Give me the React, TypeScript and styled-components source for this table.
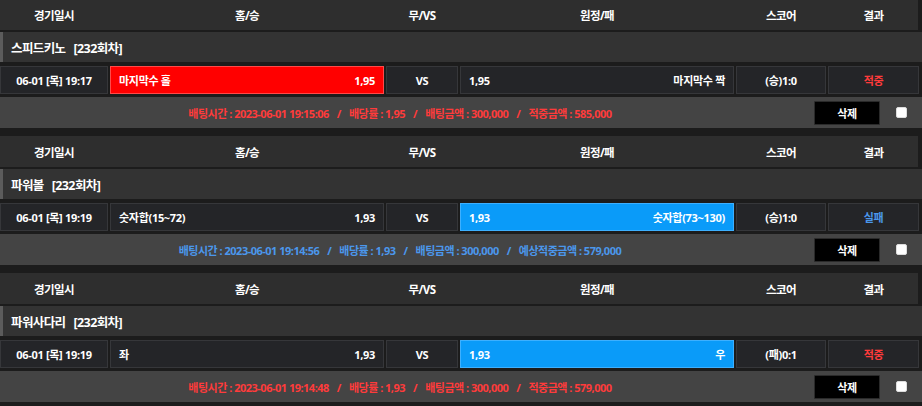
import React from 'react'
import styled, { createGlobalStyle } from 'styled-components'

type Bet = {
	game: string
	date: string
	home: string
	homeOdds: string
	away: string
	awayOdds: string
	pick: 'home' | 'away'
	score: string
	result: string
	win: boolean
	info: [string, string][]
}

const bets: Bet[] = [
	{
		game: '스피드키노',
		date: '06-01 [목] 19:17',
		home: '마지막수 홀',
		homeOdds: '1,95',
		away: '마지막수 짝',
		awayOdds: '1,95',
		pick: 'home',
		score: '(승)1:0',
		result: '적중',
		win: true,
		info: [
			['배팅시간', '2023-06-01 19:15:06'],
			['배당률', '1,95'],
			['배팅금액', '300,000'],
			['적중금액', '585,000'],
		],
	},
	{
		game: '파워볼',
		date: '06-01 [목] 19:19',
		home: '숫자합(15~72)',
		homeOdds: '1,93',
		away: '숫자합(73~130)',
		awayOdds: '1,93',
		pick: 'away',
		score: '(승)1:0',
		result: '실패',
		win: false,
		info: [
			['배팅시간', '2023-06-01 19:14:56'],
			['배당률', '1,93'],
			['배팅금액', '300,000'],
			['예상적중금액', '579,000'],
		],
	},
	{
		game: '파워사다리',
		date: '06-01 [목] 19:19',
		home: '좌',
		homeOdds: '1,93',
		away: '우',
		awayOdds: '1,93',
		pick: 'away',
		score: '(패)0:1',
		result: '적중',
		win: true,
		info: [
			['배팅시간', '2023-06-01 19:14:48'],
			['배당률', '1,93'],
			['배팅금액', '300,000'],
			['적중금액', '579,000'],
		],
	},
]

const RED = '#ff3b3b'
const BLUE = '#4b97ec'

const GlobalStyle = createGlobalStyle`
	html, body {
		margin: 0;
		padding: 0;
		background: #1c1c1c;
	}
	body {
		font-family: 'Noto Sans', 'Noto Sans CJK KR', sans-serif;
		color: #fff;
	}
`

const Page = styled.div`
	width: 922px;
	margin-top: -1px;
`

const Block = styled.section`
	display: flex;
	flex-direction: column;
	margin-bottom: 8px;
`

const Columns = styled.div`
	display: grid;
	grid-template-columns: 108px 274px 72px 274px 90px 91px;
	column-gap: 2px;
	width: 919px;
`

const HeadRow = styled(Columns)`
	height: 31px;
	background: #2e2e2e;
	border-right: 1px solid #1c1c1c;
	box-sizing: border-box;
`

const HeadCell = styled.div`
	display: flex;
	align-items: center;
	justify-content: center;
	font-size: 11.5px;
	font-weight: 700;
	letter-spacing: -0.6px;
`

const Title = styled.div`
	margin-top: 2px;
	height: 30px;
	display: flex;
	align-items: center;
	padding-left: 8px;
	background: #333333;
	border-left: 3px solid #5c5c5c;
	font-size: 12.5px;
	font-weight: 700;
	letter-spacing: -0.6px;
`

const Round = styled.span`
	margin-left: 8px;
`

const DataRow = styled(Columns)`
	margin-top: 4px;
	height: 28px;
`

const Cell = styled.div<{ $fill?: string; $edge?: string; $align?: string; $color?: string }>`
	display: flex;
	align-items: center;
	justify-content: ${(p) => p.$align || 'center'};
	padding: 0 8px;
	background: ${(p) => p.$fill || '#242528'};
	border: 1px solid ${(p) => p.$edge || '#36373a'};
	color: ${(p) => p.$color || '#fff'};
	font-size: 11px;
	font-weight: 700;
	letter-spacing: -0.3px;
	white-space: nowrap;
`

const BetRow = styled.div<{ $color: string }>`
	margin-top: 3px;
	height: 31px;
	display: flex;
	align-items: center;
	background: #444444;
	color: ${(p) => p.$color};
	font-size: 11px;
	font-weight: 700;
	letter-spacing: -0.5px;
`

const Info = styled.div`
	width: 800px;
	text-align: center;
	white-space: pre;
`

const Slash = styled.span`
	margin: 0 8px;
`

const DeleteButton = styled.button`
	margin-left: 14px;
	width: 66px;
	height: 24px;
	background: #000;
	border: 1px solid #2a2a2a;
	border-radius: 1px;
	color: #fff;
	font-family: inherit;
	font-size: 11px;
	font-weight: 700;
	letter-spacing: -0.3px;
	padding: 0;
`

const Check = styled.span`
	margin-left: 16px;
	width: 11px;
	height: 11px;
	background: #fff;
	border-radius: 2px;
	box-sizing: border-box;
	border: 1px solid #ddd;
`

const headers = ['경기일시', '홈/승', '무/VS', '원정/패', '스코어', '결과']

function BetBlock({ bet }: { bet: Bet }) {
	const homeOn = bet.pick === 'home'
	const awayOn = bet.pick === 'away'
	const infoColor = bet.win ? RED : BLUE

	return (
		<Block>
			<HeadRow>
				{headers.map((h) => (
					<HeadCell key={h}>{h}</HeadCell>
				))}
			</HeadRow>
			<Title>
				{bet.game}
				<Round>[232회차]</Round>
			</Title>
			<DataRow>
				<Cell>{bet.date}</Cell>
				<Cell
					$align='space-between'
					$fill={homeOn ? '#ff0000' : undefined}
					$edge={homeOn ? '#ff4a4a' : undefined}
				>
					<span>{bet.home}</span>
					<span>{bet.homeOdds}</span>
				</Cell>
				<Cell>VS</Cell>
				<Cell
					$align='space-between'
					$fill={awayOn ? '#0a9bf9' : undefined}
					$edge={awayOn ? '#3db0ff' : undefined}
				>
					<span>{bet.awayOdds}</span>
					<span>{bet.away}</span>
				</Cell>
				<Cell>{bet.score}</Cell>
				<Cell $color={bet.win ? RED : BLUE}>{bet.result}</Cell>
			</DataRow>
			<BetRow $color={infoColor}>
				<Info>
					{bet.info.map(([k, v], i) => (
						<React.Fragment key={k}>
							{i > 0 && <Slash>/</Slash>}
							{`${k} : ${v}`}
						</React.Fragment>
					))}
				</Info>
				<DeleteButton>삭제</DeleteButton>
				<Check />
			</BetRow>
		</Block>
	)
}

export default function App() {
	return (
		<>
			<GlobalStyle />
			<Page>
				{bets.map((b) => (
					<BetBlock key={b.info[0][1]} bet={b} />
				))}
			</Page>
		</>
	)
}
